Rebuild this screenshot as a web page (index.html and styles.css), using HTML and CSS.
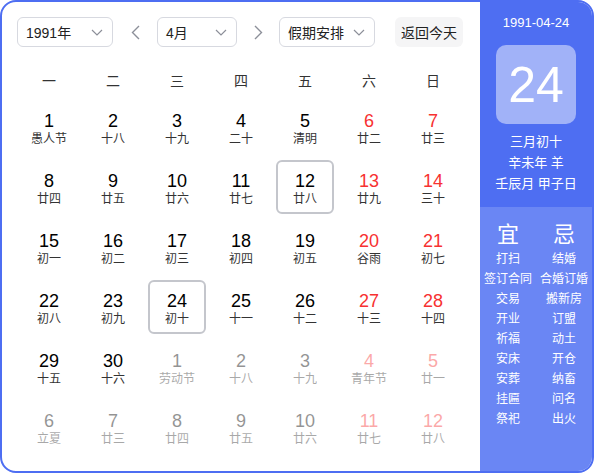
FILE: index.html
```html
<!DOCTYPE html>
<html lang="zh-CN">
<head>
<meta charset="utf-8">
<title>万年历</title>
<link rel="stylesheet" href="styles.css">
</head>
<body>
<div class="cal">
  <div class="main">
    <div class="controls">
      <div class="select w96"><span>1991年</span><svg class="chev" viewBox="0 0 12 7"><path d="M1 1l5 5 5-5"/></svg></div>
      <div class="arrow a44"><svg viewBox="0 0 9 15"><path d="M8 1L1.5 7.5 8 14"/></svg></div>
      <div class="select w80"><span>4月</span><svg class="chev" viewBox="0 0 12 7"><path d="M1 1l5 5 5-5"/></svg></div>
      <div class="arrow"><svg viewBox="0 0 9 15"><path d="M1 1l6.5 6.5L1 14"/></svg></div>
      <div class="select w96"><span>假期安排</span><svg class="chev" viewBox="0 0 12 7"><path d="M1 1l5 5 5-5"/></svg></div>
      <div class="today-btn">返回今天</div>
    </div>
    <div class="week">
      <div>一</div><div>二</div><div>三</div><div>四</div><div>五</div><div>六</div><div>日</div>
    </div>
    <div class="grid">
      <div class="cell"><b>1</b><i>愚人节</i></div>
      <div class="cell"><b>2</b><i>十八</i></div>
      <div class="cell"><b>3</b><i>十九</i></div>
      <div class="cell"><b>4</b><i>二十</i></div>
      <div class="cell"><b>5</b><i>清明</i></div>
      <div class="cell red"><b>6</b><i>廿二</i></div>
      <div class="cell red"><b>7</b><i>廿三</i></div>

      <div class="cell"><b>8</b><i>廿四</i></div>
      <div class="cell"><b>9</b><i>廿五</i></div>
      <div class="cell"><b>10</b><i>廿六</i></div>
      <div class="cell"><b>11</b><i>廿七</i></div>
      <div class="cell boxed"><b>12</b><i>廿八</i></div>
      <div class="cell red"><b>13</b><i>廿九</i></div>
      <div class="cell red"><b>14</b><i>三十</i></div>

      <div class="cell"><b>15</b><i>初一</i></div>
      <div class="cell"><b>16</b><i>初二</i></div>
      <div class="cell"><b>17</b><i>初三</i></div>
      <div class="cell"><b>18</b><i>初四</i></div>
      <div class="cell"><b>19</b><i>初五</i></div>
      <div class="cell red"><b>20</b><i>谷雨</i></div>
      <div class="cell red"><b>21</b><i>初七</i></div>

      <div class="cell"><b>22</b><i>初八</i></div>
      <div class="cell"><b>23</b><i>初九</i></div>
      <div class="cell boxed"><b>24</b><i>初十</i></div>
      <div class="cell"><b>25</b><i>十一</i></div>
      <div class="cell"><b>26</b><i>十二</i></div>
      <div class="cell red"><b>27</b><i>十三</i></div>
      <div class="cell red"><b>28</b><i>十四</i></div>

      <div class="cell"><b>29</b><i>十五</i></div>
      <div class="cell"><b>30</b><i>十六</i></div>
      <div class="cell other"><b>1</b><i>劳动节</i></div>
      <div class="cell other"><b>2</b><i>十八</i></div>
      <div class="cell other"><b>3</b><i>十九</i></div>
      <div class="cell other red"><b>4</b><i>青年节</i></div>
      <div class="cell other red"><b>5</b><i>廿一</i></div>

      <div class="cell other"><b>6</b><i>立夏</i></div>
      <div class="cell other"><b>7</b><i>廿三</i></div>
      <div class="cell other"><b>8</b><i>廿四</i></div>
      <div class="cell other"><b>9</b><i>廿五</i></div>
      <div class="cell other"><b>10</b><i>廿六</i></div>
      <div class="cell other red"><b>11</b><i>廿七</i></div>
      <div class="cell other red"><b>12</b><i>廿八</i></div>
    </div>
  </div>
  <div class="side">
    <div class="side-top">
      <div class="date">1991-04-24</div>
      <div class="bigday">24</div>
      <div class="lunar">
        <div>三月初十</div>
        <div>辛未年 羊</div>
        <div>壬辰月 甲子日</div>
      </div>
    </div>
    <div class="side-bottom">
      <div class="col">
        <div class="head">宜</div>
        <div>打扫</div><div>签订合同</div><div>交易</div><div>开业</div><div>祈福</div><div>安床</div><div>安葬</div><div>挂匾</div><div>祭祀</div>
      </div>
      <div class="col">
        <div class="head">忌</div>
        <div>结婚</div><div>合婚订婚</div><div>搬新房</div><div>订盟</div><div>动土</div><div>开仓</div><div>纳畜</div><div>问名</div><div>出火</div>
      </div>
    </div>
  </div>
</div>
</body>
</html>
```
FILE: styles.css
```css
* { box-sizing: border-box; }
html, body { margin: 0; padding: 0; background: #fff; }
body {
  font-family: "Liberation Sans", "Noto Sans CJK SC", sans-serif;
  color: #333;
}
.cal {
  width: 594px;
  height: 473px;
  border: 2px solid #4e6ef2;
  border-radius: 16px;
  overflow: hidden;
  display: flex;
  background: #fff;
}
.main {
  flex: 1;
  padding: 15px 15px 0 15px;
}
.controls {
  display: flex;
  align-items: center;
  height: 30px;
}
.select {
  height: 30px;
  border: 1px solid #d7d9e0;
  border-radius: 6px;
  display: flex;
  align-items: center;
  justify-content: space-between;
  padding: 0 9px 0 8px;
  font-size: 14px;
  color: #222;
}
.w96 { width: 96px; }
.w80 { width: 80px; }
.chev {
  width: 12px;
  height: 7px;
  fill: none;
  stroke: #8c8f99;
  stroke-width: 1.2;
}
.arrow {
  width: 42px;
  height: 30px;
  display: flex;
  align-items: center;
  justify-content: center;
}
.arrow.a44 { width: 44px; }
.arrow svg {
  width: 9px;
  height: 15px;
  fill: none;
  stroke: #8c8f99;
  stroke-width: 1.4;
}
.today-btn {
  margin-left: 20px;
  width: 68px;
  height: 30px;
  border-radius: 6px;
  background: #f5f5f6;
  display: flex;
  align-items: center;
  justify-content: center;
  font-size: 14px;
  color: #222;
}
.week {
  margin-top: 15px;
  height: 35px;
  display: grid;
  grid-template-columns: repeat(7, 64px);
  align-items: center;
  text-align: center;
  font-size: 14px;
  color: #333;
}
.grid {
  display: grid;
  grid-template-columns: repeat(7, 64px);
  grid-auto-rows: 60px;
}
.cell {
  margin: 3px;
  border: 2px solid transparent;
  border-radius: 6px;
  display: flex;
  flex-direction: column;
  align-items: center;
  padding-top: 8px;
}
.cell b {
  font-weight: normal;
  font-size: 18px;
  line-height: 22px;
  color: #000;
}
.cell i {
  font-style: normal;
  font-size: 12px;
  line-height: 14px;
  color: #333;
}
.cell.red b { color: #f73131; }
.cell.other { opacity: 0.42; }
.cell.boxed { border-color: #c4c6cc; }
.side {
  width: 112px;
  display: flex;
  flex-direction: column;
  color: #fff;
}
.side-top {
  background: #4e6ef2;
  height: 205px;
  display: flex;
  flex-direction: column;
  align-items: center;
  padding-top: 13px;
}
.date {
  font-size: 13px;
  line-height: 16px;
}
.bigday {
  margin-top: 14px;
  width: 80px;
  height: 79px;
  border-radius: 10px;
  background: #a1b2f8;
  display: flex;
  align-items: center;
  justify-content: center;
  font-size: 50px;
  color: #fff;
}
.lunar {
  margin-top: 7px;
  text-align: center;
  font-size: 13px;
  line-height: 21px;
}
.side-bottom {
  flex: 1;
  background: #6a86f4;
  display: grid;
  grid-template-columns: 56px 56px;
  padding-top: 14px;
}
.col {
  text-align: center;
  font-size: 12px;
  line-height: 20px;
}
.col .head {
  font-size: 22px;
  line-height: 28px;
}
```
